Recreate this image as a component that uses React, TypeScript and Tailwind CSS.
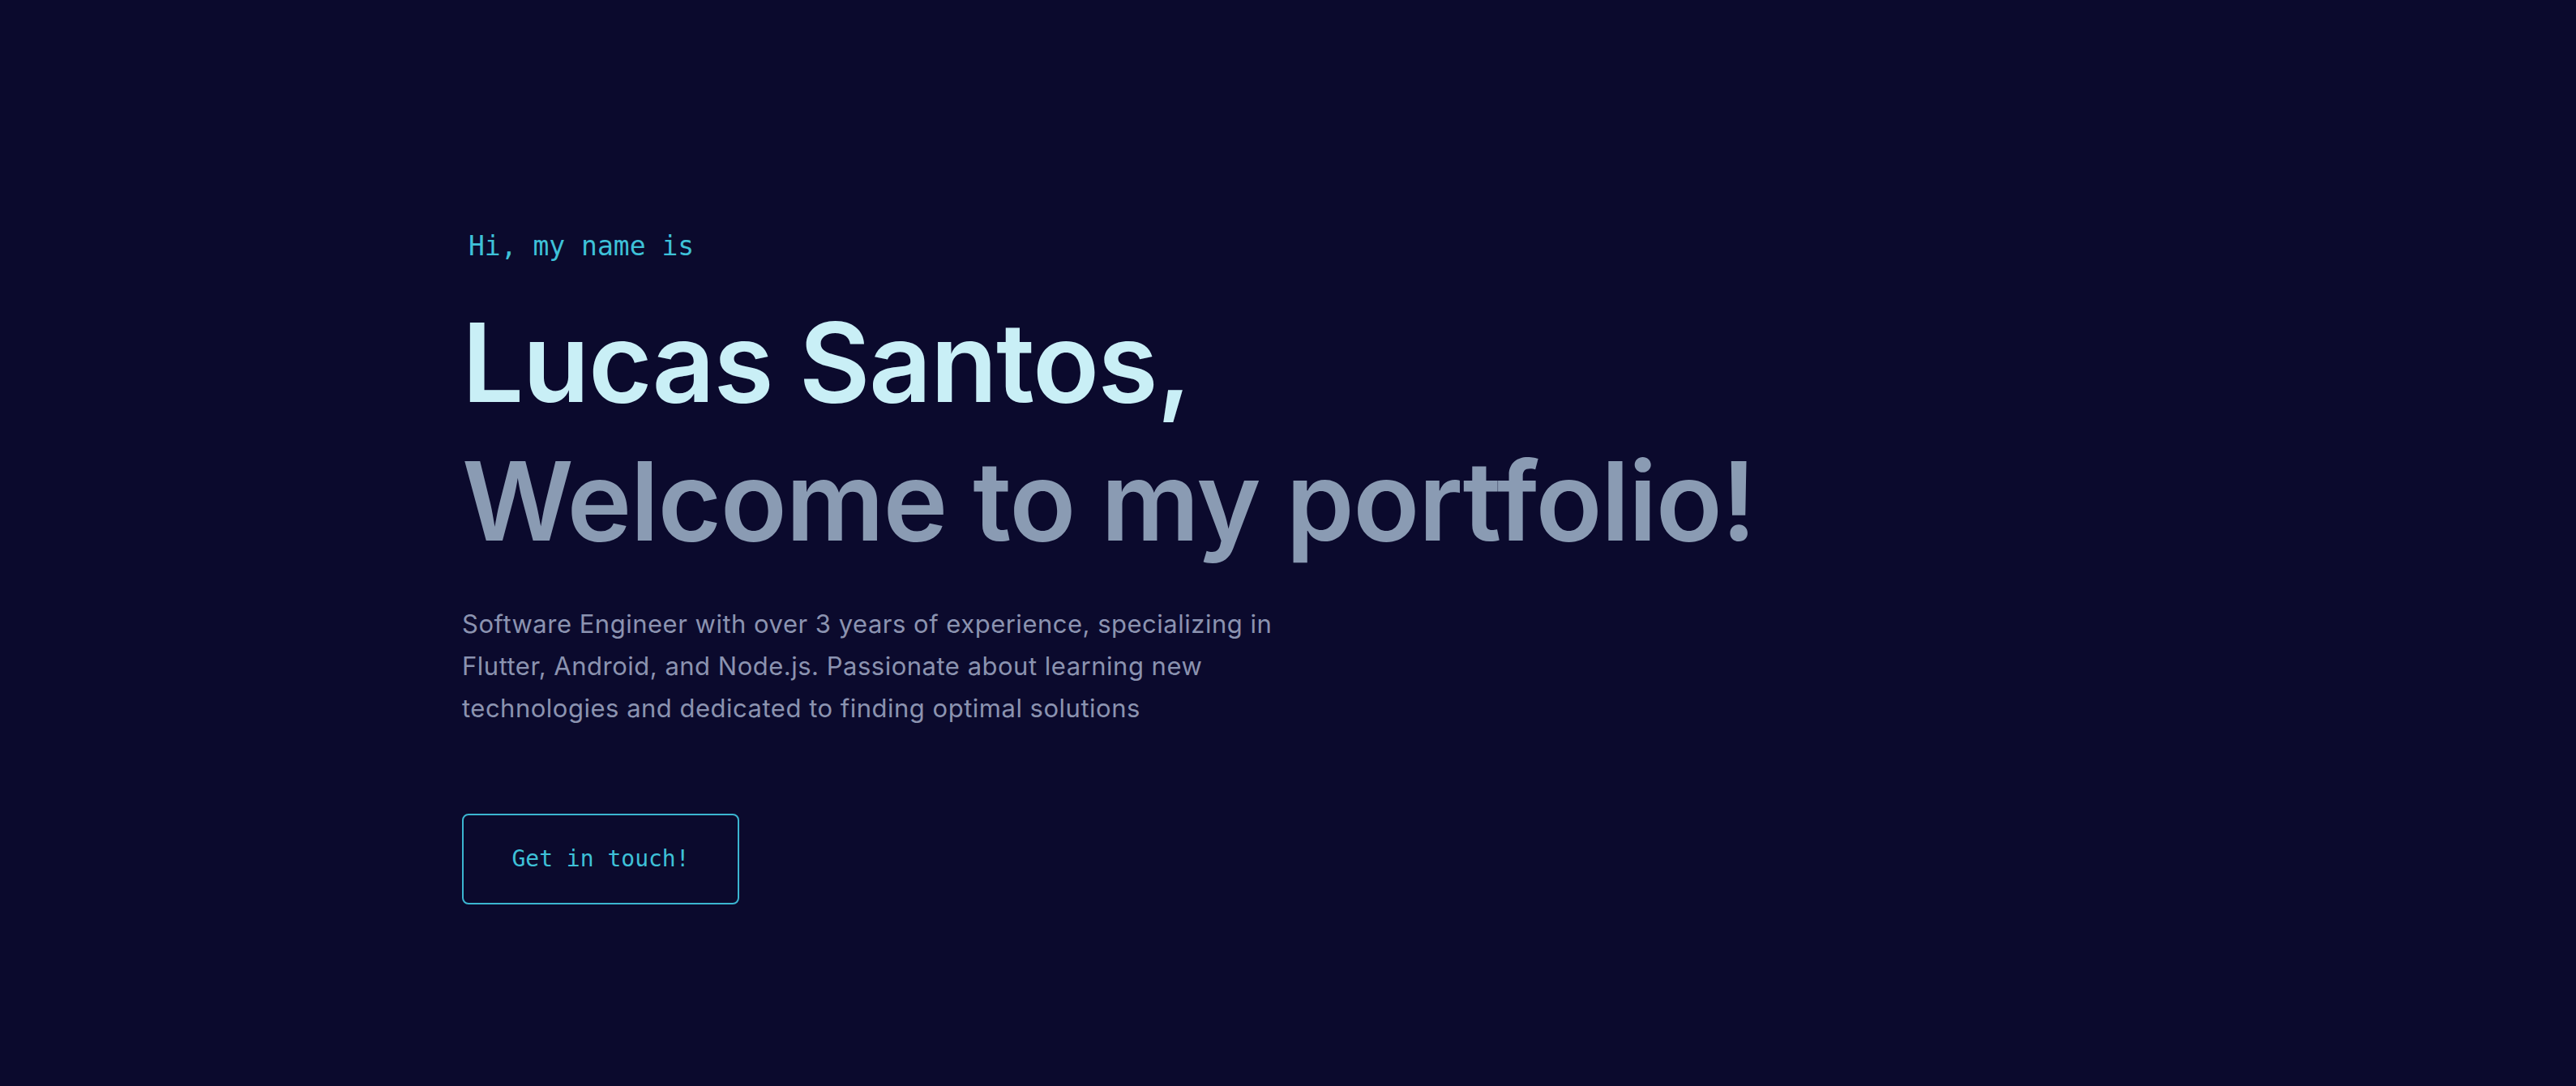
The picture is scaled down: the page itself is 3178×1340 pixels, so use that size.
import React from "react";

const mono = "font-['DejaVu_Sans_Mono','Liberation_Mono',monospace]";
const sans = "font-['Inter','Roboto',sans-serif]";

function Hero() {
  return (
    <section className="min-h-screen w-full bg-[#0b0a2d] px-[570px] pt-[284px]">
      <h1 className={`${mono} ml-2 text-[33px] leading-[40px] text-[#3ec1d8]`}>Hi, my name is</h1>

      <h2 className={`${sans} mt-[38px] text-[135px] font-semibold leading-[171px] tracking-[-1.5px] text-[#c9eff6]`}>
        Lucas Santos,
      </h2>
      <h3 className={`${sans} text-[135px] font-semibold leading-[171px] tracking-[-1.5px] text-[#8a9bb3]`}>
        Welcome to my portfolio!
      </h3>

      <p className={`${sans} mt-[40px] max-w-[1060px] text-[31px] leading-[52px] tracking-[0.5px] text-[#8b93b0]`}>
        Software Engineer with over 3 years of experience, specializing in Flutter, Android, and Node.js. Passionate
        about learning new technologies and dedicated to finding optimal solutions
      </p>

      <button
        className={`${mono} mt-[104px] h-[112px] w-[342px] rounded-lg border-2 border-[#3bb5d0] text-[28px] text-[#3ec1d8]`}
      >
        Get in touch!
      </button>
    </section>
  );
}

export default function App() {
  return <Hero />;
}
